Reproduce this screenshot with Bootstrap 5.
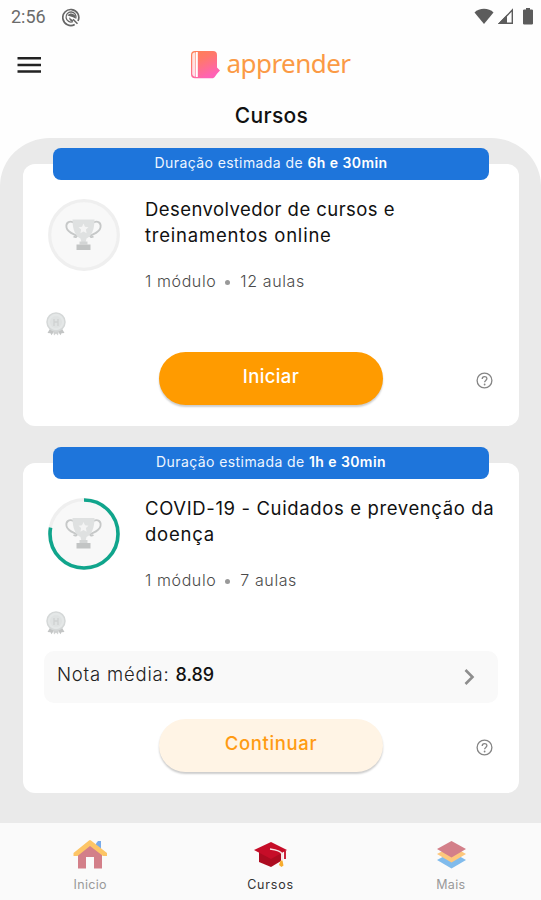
<!DOCTYPE html>
<html lang="pt-BR">
<head>
<meta charset="utf-8">
<meta name="viewport" content="width=device-width, initial-scale=1">
<title>Apprender – Cursos</title>
<link href="https://cdn.jsdelivr.net/npm/bootstrap@5.3.0/dist/css/bootstrap.min.css" rel="stylesheet">
<style>
body{font-family:Inter,"Liberation Sans",sans-serif;background:#fefefe;color:#111;height:900px;overflow:hidden}
svg{display:block;flex:none}
.statusbar{height:34px;padding:0 7px 0 11px;font:400 18px/34px Roboto,sans-serif;color:#6b6b6b}
.topbar{height:61px;display:grid;grid-template-columns:1fr auto 1fr;padding:0 17px}
.wordmark{font:400 26px/30px "Noto Sans",sans-serif;color:#fb9a45;letter-spacing:-.55px;margin:-4px 1px 0 7px}
.page-title{height:43px;font-size:21px;font-weight:450;line-height:41px;letter-spacing:.3px;padding-left:2px}
.panel{background:#eaeaea;border-radius:50px 50px 0 0/48px 48px 0 0;padding:10px 22px 0 23px}
.course+.course{margin-top:21px}
.duration{height:32px;margin:0 30px -16px;background:#1e75db;border-radius:8px;color:#eef5ff;font-size:14px;line-height:30px;letter-spacing:.42px}
.duration strong{font-weight:600;color:#fff}
.course-card{border-radius:12px;padding:32px 21px 21px}
.course-head{padding-left:4px;gap:25px}
.progress-ring{margin-top:3px}
.course-title{font-size:18.5px;line-height:26px;font-weight:400;white-space:nowrap;letter-spacing:.63px}
.course-title .tight{letter-spacing:.44px}
.course-title .loose{letter-spacing:.78px}
.meta{font-size:16px;line-height:20px;margin-top:23px;color:#4b4b4b;font-weight:300;letter-spacing:.6px}
.dot{width:5px;height:5px;border-radius:50%;background:#999;margin:3px 10px 0 9px}
.medal{margin:21px 0 16px 2px}
.action-row{display:grid;grid-template-columns:1fr 224px 1fr}
.pill{height:53px;border:0;border-radius:27px;font-size:18.5px;line-height:24px;padding:0 0 5px;letter-spacing:.35px;box-shadow:0 2px 2px rgba(0,0,0,.2)}
.pill-start,.pill-start:hover{background:#ff9b00;color:#fff;font-weight:500}
.pill-continue,.pill-continue:hover{background:#fff4e5;color:#ff9b12;font-weight:500;letter-spacing:.65px}
.help-icon{margin:3px 5px 0 auto}
.grade{height:52px;border-radius:10px;background:#f9f9f9;padding:0 22px 4px 13px;font-size:18.5px;font-weight:300;color:#222;margin-bottom:16px;letter-spacing:.8px}
.grade strong{font-size:18px;font-weight:500;color:#111;letter-spacing:0}
.tabs{height:77px;background:#fafafa;font-size:12.5px;line-height:16px;letter-spacing:.3px}
.tabs a{width:33.333%;color:#999;padding-top:14px}
.tabs a.active{color:#333;letter-spacing:.8px}
</style>
</head>
<body class="d-flex flex-column">
<svg width="0" height="0" class="position-absolute" aria-hidden="true">
<defs>
<symbol id="trophy" viewBox="0 0 38 32">
<g fill="none" stroke="#c6c8c8" stroke-width="1.8"><path d="M9 4C5 2 1 4 2 9c1 5 6 6 10 8M29 4c4-2 8 0 7 5-1 5-6 6-10 8"/><path d="M13 15c0 4-2 4-4 3M25 15c0 4 2 4 4 3"/></g>
<path d="M8 1h22c0 10-3 17-8 19l-1 4h-4l-1-4C11 18 8 11 8 1z" fill="#dfe1e1"/>
<path d="M19 5l1.5 3.3 3.5.4-2.6 2.4.7 3.6-3.1-1.8-3.1 1.8.7-3.6L14 8.700l3.500-.4z" fill="#f4f4f4"/>
<path d="M15 23h8v3h-8z" fill="#d3d5d5"/><path d="M12 26h14v5.500H12z" fill="#c2c4c4"/>
</symbol>
<symbol id="award" viewBox="0 0 20 24">
<path d="M5 15l-3.500 6 3 .2 1 2L9 18M15 15l3.500 6-3 .2-1 2L11 18" fill="#c3c5c5"/><path d="M7 18l1 5.500 2-2 2 2 1-5.500z" fill="#ced0d0"/>
<circle cx="10" cy="10" r="9" fill="#e4e7e7" stroke="#d5d8d8" stroke-width="1.500"/><circle cx="10" cy="10" r="6" fill="#dfe2e2"/>
<path d="M8 7v7M12 7v7M8 10h4" stroke="#cfd2d2" stroke-width="1.300" fill="none"/>
</symbol>
<symbol id="help" viewBox="0 0 17 17">
<circle cx="8.500" cy="8.500" r="7.400" fill="none" stroke="#858585" stroke-width="1.300"/><path d="M6.200 6.900c0-3 4.700-3 4.700-.3 0 1.800-2.300 1.800-2.300 3.700" fill="none" stroke="#858585" stroke-width="1.300"/><circle cx="8.600" cy="12.500" r=".9" fill="#858585"/>
</symbol>
</defs>
</svg>

<header>
<div class="statusbar d-flex align-items-center">
<span>2:56</span>
<svg class="ms-3" width="19" height="19" viewBox="0 0 19 19"><path d="M12.700 16.500A8 8 0 1 1 16 13" fill="none" stroke="#666" stroke-width="1.700"/><path d="M11 13.600A5 5 0 1 1 13.800 10.500" fill="none" stroke="#666" stroke-width="1.300"/><path d="M5.500 7.500c2.500-3 6-2.300 8 .5v2.500L11 9.200zM7 9.200l4.500 3.500-2 .7q-2.500-1-2.500-4.200z" fill="#666"/><path d="M11 11.200l4.500 4.500" stroke="#666" stroke-width="1.600"/></svg>
<div class="ms-auto d-flex align-items-center">
<svg width="20" height="18" viewBox="0 0 20 18"><path d="M0.500 4.500C5-.5 15-.5 19.500 4.500L10 16z" fill="#5c5c5c"/></svg>
<svg class="ms-1" width="16" height="18" viewBox="0 0 16 18"><path d="M1.500 15.300L14.300 2v13.300z" fill="none" stroke="#5c5c5c" stroke-width="1.400"/><path d="M0 16L9 6.700V16z" fill="#5c5c5c"/></svg>
<svg class="ms-2" width="12" height="18" viewBox="0 0 12 18"><path d="M4 0h4v1.500h2.200L11 2.300v13.400l-.8.800H1.800l-.8-.8V2.300l.8-.8H4z" fill="#5c5c5c"/></svg>
</div>
</div>
<div class="topbar align-items-center">
<svg width="25" height="18" viewBox="0 0 25 18"><path d="M.5 2.200H24M.5 8.900H24M.5 15.600H24" stroke="#222" stroke-width="2.500"/></svg>
<div class="d-flex align-items-center">
<svg width="30" height="30" viewBox="0 0 30 30"><defs><linearGradient id="cover" x1="0" y1="0" x2=".5" y2="1"><stop offset="0" stop-color="#ff8052"/><stop offset=".4" stop-color="#ff786b"/><stop offset="1" stop-color="#ff62b6"/></linearGradient></defs><path d="M5 1h18q4 0 4 4v12.500l3 3-3 3.200-2.500 3.500-1.500 1H5q-4 0-4-4V5q0-4 4-4z" fill="url(#cover)"/><path d="M5.500 2.200Q2.200 2.300 2.200 5v18.500q0 3 3.300 3.200z" fill="#fff" opacity=".8"/><path d="M6.900 2v25" stroke="#fff" stroke-width="1.800"/></svg>
<span class="wordmark">apprender</span>
</div>
</div>
<h1 class="page-title text-center m-0">Cursos</h1>
</header>

<main class="panel flex-grow-1">
<section class="course">
<div class="duration position-relative text-center">Duração estimada de <strong>6h e 30min</strong></div>
<div class="course-card bg-white">
<div class="course-head d-flex align-items-start">
<svg class="progress-ring" width="72" height="72" viewBox="0 0 72 72"><circle cx="36" cy="36" r="34.300" fill="#f8f8f8" stroke="#efefef" stroke-width="3.200"/><use href="#trophy" x="16.500" y="19.500" width="38" height="32"/></svg>
<div><h2 class="course-title m-0"><span class="tight">Desenvolvedor de cursos e</span><br><span class="loose">treinamentos online</span></h2>
<div class="meta d-flex align-items-center"><span>1 módulo</span><i class="dot"></i><span>12 aulas</span></div></div>
</div>
<svg class="medal" width="20" height="24"><use href="#award"/></svg>
<div class="action-row align-items-center"><span></span><button class="btn pill pill-start">Iniciar</button><svg class="help-icon" width="17" height="17"><use href="#help"/></svg></div>
</div>
</section>

<section class="course">
<div class="duration position-relative text-center">Duração estimada de <strong>1h e 30min</strong></div>
<div class="course-card bg-white">
<div class="course-head d-flex align-items-start">
<svg class="progress-ring" width="72" height="72" viewBox="0 0 72 72"><circle cx="36" cy="36" r="34.300" fill="#f8f8f8" stroke="#efefef" stroke-width="3.200"/><circle cx="36" cy="36" r="34" fill="none" stroke="#10a58c" stroke-width="3.600" pathLength="100" stroke-dasharray="78 100" transform="rotate(-90 36 36)"/><use href="#trophy" x="16.500" y="19" width="38" height="32"/></svg>
<div><h2 class="course-title m-0">COVID-19 - Cuidados e prevenção da<br><span class="loose">doença</span></h2>
<div class="meta d-flex align-items-center"><span>1 módulo</span><i class="dot"></i><span>7 aulas</span></div></div>
</div>
<svg class="medal" width="20" height="24"><use href="#award"/></svg>
<div class="grade d-flex align-items-center justify-content-between"><span>Nota média: <strong>8.89</strong></span><svg class="mt-1" width="13" height="18" viewBox="0 0 13 18"><path d="M2.500 2l7 7-7 7" fill="none" stroke="#8e8e8e" stroke-width="2.600"/></svg></div>
<div class="action-row align-items-center"><span></span><button class="btn pill pill-continue">Continuar</button><svg class="help-icon" width="17" height="17"><use href="#help"/></svg></div>
</div>
</section>
</main>

<nav class="tabs d-flex flex-shrink-0">
<a href="#" class="d-flex flex-column align-items-center text-decoration-none"><svg width="36" height="36" viewBox="0 0 36 36"><path d="M24 6.500l2-2.500h3v9l-5-4z" fill="#78abea"/><path d="M6 17L18 7l12 10v14.500h-8V20h-8v11.500H6z" fill="#d37f89"/><path d="M1.500 16L17 3.500q1-.8 2 0L35 16v3h-4L18 9 5.500 19h-4z" fill="#fdc566"/></svg><span class="mt-1">Inicio</span></a>
<a href="#" class="active d-flex flex-column align-items-center text-decoration-none"><svg width="36" height="36" viewBox="0 0 36 36"><path d="M7 14v11l12 5 10-6V14z" fill="#ac0b20"/><path d="M2 13L19 5l16 8-16 9z" fill="#c60d28"/><path d="M18 12q11 1.500 12 5v6" fill="none" stroke="#f7e4e6" stroke-width="1.600"/><path d="M33 14v8" stroke="#c60d28" stroke-width="1.800"/><path d="M28.500 23.500h2l1 5-2 1.500-2.500-2z" fill="#f7ad2e"/></svg><span class="mt-1">Cursos</span></a>
<a href="#" class="d-flex flex-column align-items-center text-decoration-none"><svg width="36" height="36" viewBox="0 0 36 36"><path d="M4 23l15-8 14 8-14.500 8.500z" fill="#80bbec"/><path d="M4 17l15-8 14 8-14.500 8.500z" fill="#fdc77c"/><path d="M4 12l14.500-8L33 12l-14.500 8.500z" fill="#d37f89"/></svg><span class="mt-1">Mais</span></a>
</nav>
<script src="https://cdn.jsdelivr.net/npm/bootstrap@5.3.0/dist/js/bootstrap.bundle.min.js"></script>
</body>
</html>
